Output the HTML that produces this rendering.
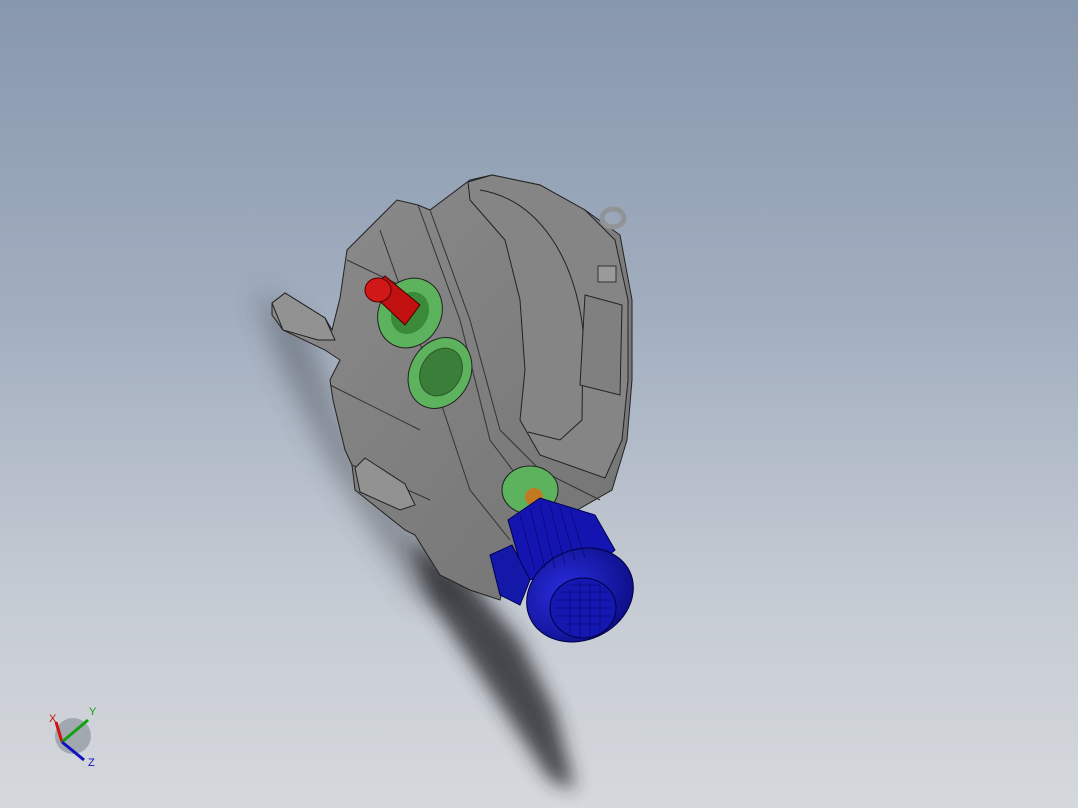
<!DOCTYPE html>
<html><head><style>
html,body{margin:0;padding:0;width:1078px;height:808px;overflow:hidden}
body{background:linear-gradient(180deg,#8797ad 0%,#a3afc0 40%,#c6ccd4 75%,#d5d8dc 100%);font-family:"Liberation Sans",sans-serif}
</style></head><body>
<svg width="1078" height="808" viewBox="0 0 1078 808" style="position:absolute;left:0;top:0">
<defs>
<filter id="b1" x="-50%" y="-50%" width="200%" height="200%"><feGaussianBlur stdDeviation="14"/></filter>
<filter id="b2" x="-50%" y="-50%" width="200%" height="200%"><feGaussianBlur stdDeviation="9"/></filter>
<radialGradient id="mot" cx="0.4" cy="0.4" r="0.7"><stop offset="0" stop-color="#2a2ee0"/><stop offset="1" stop-color="#0a0c80"/></radialGradient>
<linearGradient id="body" x1="0" y1="0" x2="1" y2="1"><stop offset="0" stop-color="#8c8c8c"/><stop offset="1" stop-color="#737373"/></linearGradient>
</defs>
<!-- shadow -->
<g filter="url(#b1)" opacity="0.45">
<path d="M255 290 L300 320 L340 420 L390 500 L440 560 L470 600 L420 600 L380 540 L330 460 L285 370 Z" fill="#3a3c42"/>
</g>
<g filter="url(#b2)" opacity="0.8">
<path d="M410 540 L470 580 L520 640 L555 710 L575 790 L550 780 L510 720 L470 660 L430 600 Z" fill="#25272b"/>
</g>
<!-- body -->
<path d="M272 303 L285 293 L325 318 L332 330 L340 298 L347 250 L397 200 L418 205 L430 210 L470 180 L492 175 L540 185 L585 210 L620 235 L632 300 L632 380 L627 440 L612 490 L560 520 L510 560 L500 600 L470 590 L440 575 L415 535 L405 530 L355 490 L352 465 L345 450 L333 400 L330 380 L340 360 L325 350 L283 330 L272 315 Z" fill="url(#body)" stroke="#222" stroke-width="1"/>
<path d="M468 182 L492 175 L540 185 L585 210 L615 240 L628 300 L628 380 L622 440 L605 478 L540 455 L520 420 L525 370 L520 300 L505 240 L470 200 Z" fill="#858585" stroke="#222" stroke-width="1"/>
<path d="M480 190 C540 200 575 260 583 330 L582 420 L560 440 L528 432" fill="none" stroke="#222" stroke-width="1"/>
<path d="M430 210 L470 320 L500 430 L540 470 L600 500" fill="none" stroke="#333" stroke-width="1"/>
<path d="M418 205 L460 320 L490 440 L520 480" fill="none" stroke="#333" stroke-width="1"/>
<path d="M347 260 L410 290 M330 385 L420 430 M352 465 L430 500 M380 230 L440 400 L470 490 L510 540" fill="none" stroke="#333" stroke-width="1"/>
<path d="M272 303 L285 293 L325 318 L335 340 L318 340 L283 330 Z" fill="#929292" stroke="#222"/>
<path d="M355 468 L365 458 L405 484 L415 505 L400 510 L360 492 Z" fill="#929292" stroke="#222"/>
<path d="M585 295 L622 305 L620 395 L580 385 Z" fill="#808080" stroke="#222"/>
<ellipse cx="613" cy="218" rx="11" ry="9" fill="none" stroke="#909498" stroke-width="5"/>
<rect x="598" y="266" width="18" height="16" fill="#9a9a9a" stroke="#333"/>
<ellipse cx="410" cy="313" rx="31" ry="36" transform="rotate(30 410 313)" fill="#5db35d" stroke="#222"/>
<ellipse cx="410" cy="313" rx="18" ry="22" transform="rotate(30 410 313)" fill="#3a8a3a"/>
<ellipse cx="440" cy="373" rx="30" ry="37" transform="rotate(30 440 373)" fill="#5db35d" stroke="#222"/>
<ellipse cx="441" cy="372" rx="20" ry="25" transform="rotate(30 441 372)" fill="#3a7e3a" stroke="#2a5a2a"/>
<ellipse cx="530" cy="490" rx="28" ry="24" fill="#5db35d" stroke="#222"/>
<circle cx="534" cy="497" r="9" fill="#c07a20"/>
<path d="M368 290 L385 276 L420 305 L405 325 Z" fill="#c01010" stroke="#400"/>
<ellipse cx="378" cy="290" rx="13" ry="12" fill="#d01818" stroke="#500"/>
<path d="M508 520 L540 498 L595 515 L615 550 L585 575 L525 580 Z" fill="#1414b0" stroke="#000050"/>
<path d="M490 555 L512 545 L530 580 L520 605 L500 595 Z" fill="#1418a8" stroke="#000050"/>
<ellipse cx="580" cy="595" rx="55" ry="45" transform="rotate(-25 580 595)" fill="url(#mot)" stroke="#000040"/>
<ellipse cx="583" cy="608" rx="33" ry="30" fill="#1418b0" stroke="#000040"/>
<g stroke="#000060" stroke-width="0.6" opacity="0.8">
<path d="M555 600 L612 600 M555 608 L612 608 M555 616 L612 616 M560 592 L608 592 M570 585 L600 585 M565 624 L600 624 M570 590 L570 635 M580 582 L580 638 M590 582 L590 638 M600 585 L600 632"/>
<path d="M520 515 L535 570 M530 508 L545 568 M540 505 L555 568 M550 505 L565 565 M560 508 L575 560 M570 510 L585 558"/>
</g>
<circle cx="73" cy="736" r="18" fill="#9aa0a8" opacity="0.85"/>
<line x1="62" y1="742" x2="56" y2="722" stroke="#d01010" stroke-width="3"/>
<line x1="62" y1="742" x2="88" y2="720" stroke="#10a010" stroke-width="3"/>
<line x1="62" y1="742" x2="84" y2="760" stroke="#1010c0" stroke-width="3"/>
<text x="49" y="722" font-size="11" fill="#c01010">X</text>
<text x="89" y="715" font-size="11" fill="#10a010">Y</text>
<text x="88" y="766" font-size="11" fill="#1010c0">Z</text>
</svg>
</body></html>
